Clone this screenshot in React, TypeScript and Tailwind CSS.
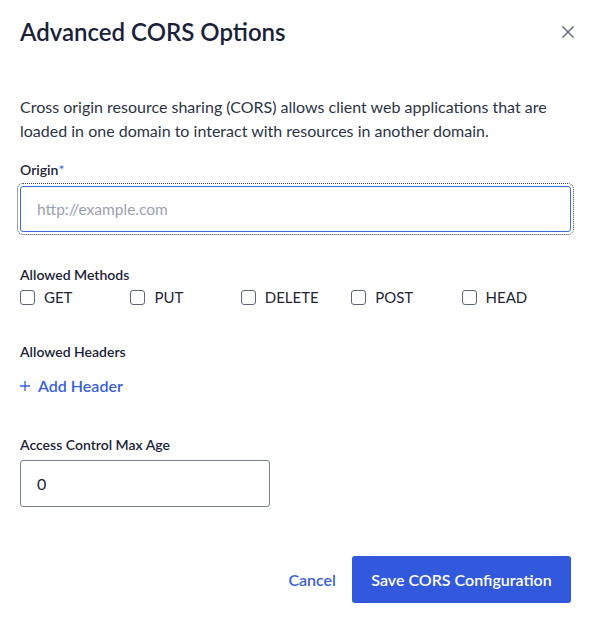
import React from 'react'

const methods = ['GET', 'PUT', 'DELETE', 'POST', 'HEAD']

export default function App() {
  return (
    <div className="w-[591px] h-[624px] bg-white px-5 font-['Lato',sans-serif] text-[#1c2336]">
      <div className="pt-[18px] flex items-center justify-between h-[46px]">
        <h1 className="text-[24px] leading-[28px] font-semibold text-[#1a2238]">Advanced CORS Options</h1>
        <button className="mr-[-6px] text-[#5b6478]">
          <svg width="18" height="18" viewBox="0 0 18 18" fill="none" stroke="currentColor" strokeWidth="1.4">
            <path d="M3.5 3.5l11 11M14.5 3.5l-11 11" />
          </svg>
        </button>
      </div>

      <p className="mt-[49px] text-[16px] leading-[24px] text-[#2d3445]">
        Cross origin resource sharing (CORS) allows client web applications that are loaded in one domain to interact with resources in another domain.
      </p>

      <label className="block mt-[18px] text-[14px] leading-[18px] font-semibold">
        Origin<span className="text-[#3f6ae0] font-normal">*</span>
      </label>
      <input
        className="mt-[7px] block w-full h-[46px] rounded-[3px] border border-[#3b6ce0] px-4 text-[15.5px] text-[#1c2336] placeholder:text-[#9ba1b0] outline-1 outline-dotted outline-offset-2 outline-[#3a3f4b]"
        placeholder="http://example.com"
      />

      <div className="mt-[34px] text-[14px] leading-[18px] font-semibold">Allowed Methods</div>
      <div className="mt-[3px] grid grid-cols-5 w-[552px] h-[20px]">
        {methods.map((m) => (
          <label key={m} className="flex items-center gap-[9px] text-[15px] leading-[20px] text-[#1f2535]">
            <span className="w-[15px] h-[15px] rounded-[3px] border border-[#5e6678] bg-white" />
            {m}
          </label>
        ))}
      </div>

      <div className="mt-[36px] text-[14px] leading-[18px] font-semibold">Allowed Headers</div>
      <button className="mt-[15px] flex items-center gap-[8px] text-[16px] leading-[20px] font-semibold text-[#3a5fdc]">
        <svg width="10" height="10" viewBox="0 0 10 10" fill="none" stroke="currentColor" strokeWidth="1.3">
          <path d="M5 0v10M0 5h10" />
        </svg>
        Add Header
      </button>

      <div className="mt-[40px] text-[14px] leading-[18px] font-semibold">Access Control Max Age</div>
      <input
        className="mt-[6px] block w-[250px] h-[47px] rounded-[3px] border border-[#7a8190] px-4 text-[16px] text-[#1c2336] outline-none"
        defaultValue="0"
      />

      <div className="mt-[49px] flex items-center justify-end gap-4">
        <button className="text-[16px] font-semibold text-[#3a5fdc]">Cancel</button>
        <button className="w-[219px] h-[47px] rounded-[3px] bg-[#3258dc] text-white text-[16px] font-semibold">
          Save CORS Configuration
        </button>
      </div>
    </div>
  )
}
